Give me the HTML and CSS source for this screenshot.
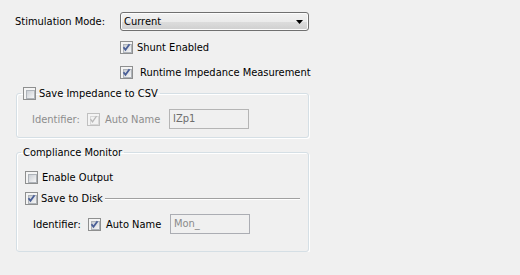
FILE: index.html
```html
<!DOCTYPE html>
<html lang="en">
<head>
  <meta charset="UTF-8">
  <title>Stimulation Settings</title>
  <link rel="stylesheet" href="styles.css">
</head>
<body>

<div class="panel">

  <div class="mode-row">
    <span class="field-label">Stimulation Mode:</span>
    <div class="combo">
      <span>Current</span>
      <svg class="arrow" width="7" height="4" viewBox="0 0 7 4"><path d="M0 0H7L3.5 4Z" fill="#000"/></svg>
    </div>
  </div>

  <div class="options">
    <label class="check">
      <span class="box"><svg viewBox="0 0 11 11"><path d="M2.5 5.2L4.5 7.8L8.5 2.2" /></svg></span>
      <span class="text">Shunt Enabled</span>
    </label>
    <label class="check wide">
      <span class="box"><svg viewBox="0 0 11 11"><path d="M2.5 5.2L4.5 7.8L8.5 2.2" /></svg></span>
      <span class="text">Runtime Impedance Measurement</span>
    </label>
  </div>

  <!-- Save impedance group -->
  <fieldset class="group">
    <legend>
      <label class="check tight">
        <span class="box"></span>
        <span class="text">Save Impedance to CSV</span>
      </label>
    </legend>
    <div class="group-body csv-body">
      <div class="ident-row disabled">
        <span class="ident-label">Identifier:</span>
        <label class="check">
          <span class="box"><svg viewBox="0 0 11 11"><path d="M2.5 5.2L4.5 7.8L8.5 2.2" /></svg></span>
          <span class="text auto">Auto Name</span>
        </label>
        <div class="textbox">IZp1</div>
      </div>
    </div>
  </fieldset>

  <!-- Compliance monitor group -->
  <fieldset class="group monitor">
    <legend>Compliance Monitor</legend>
    <div class="group-body monitor-body">
      <label class="check">
        <span class="box"></span>
        <span class="text">Enable Output</span>
      </label>
      <div class="disk-row">
        <label class="check tight">
          <span class="box"><svg viewBox="0 0 11 11"><path d="M2.5 5.2L4.5 7.8L8.5 2.2" /></svg></span>
          <span class="text">Save to Disk</span>
        </label>
        <div class="rule"></div>
      </div>
      <div class="ident-row">
        <span class="ident-label">Identifier:</span>
        <label class="check">
          <span class="box"><svg viewBox="0 0 11 11"><path d="M2.5 5.2L4.5 7.8L8.5 2.2" /></svg></span>
          <span class="text auto">Auto Name</span>
        </label>
        <div class="textbox">Mon_</div>
      </div>
    </div>
  </fieldset>

</div>

</body>
</html>
```

FILE: styles.css
```css
body {
  margin: 0;
  background: #f0f0f0;
  font-family: "DejaVu Sans Condensed", "Liberation Sans", sans-serif;
  font-size: 11px;
  color: #000;
}

.panel {
  padding-top: 12px;
}

.mode-row {
  display: flex;
  align-items: center;
  padding-left: 15px;
}

.field-label {
  width: 105px;
}

.combo {
  box-sizing: border-box;
  width: 189px;
  height: 19px;
  border: 1px solid #707070;
  border-radius: 3px;
  background: linear-gradient(to bottom, #f2f2f2 0%, #ebebeb 50%, #dddddd 51%, #cfcfcf 100%);
  box-shadow: inset 0 0 0 1px #fcfcfc;
  display: flex;
  align-items: center;
  justify-content: space-between;
  padding: 0 5px 0 3px;
}

.arrow {
  display: block;
}

.options {
  display: flex;
  flex-direction: column;
  gap: 12px;
  margin-top: 10px;
  padding-left: 120px;
}

/* checkbox */
.check {
  display: flex;
  align-items: center;
  height: 13px;
  line-height: 13px;
  white-space: nowrap;
}

.check .text {
  margin-left: 4px;
}
.check.wide .text { margin-left: 7px; }
.check.tight .text { margin-left: 3px; }
.check .text.auto { margin-left: 5px; }

.box {
  position: relative;
  box-sizing: border-box;
  width: 13px;
  height: 13px;
  flex: none;
  border: 1px solid #8e8f8f;
  background: #f4f4f4;
}

.box::before {
  content: "";
  position: absolute;
  left: 2px;
  top: 2px;
  width: 7px;
  height: 7px;
  border: 1px solid #aeb3b9;
  background: linear-gradient(135deg, #cbcfd5, #f6f6f6);
}

.box svg {
  position: absolute;
  left: 0;
  top: 0;
  width: 11px;
  height: 11px;
  z-index: 1;
}

.box svg path {
  fill: none;
  stroke: #4a5f97;
  stroke-width: 1.8;
}

/* group boxes */
.group {
  box-sizing: border-box;
  width: 293px;
  margin: 8px 0 0 16px;
  padding: 0;
  border: 1px solid #d5dfe5;
  border-radius: 3px;
  box-shadow: 1px 1px 0 #fff, inset 1px 1px 0 #fff;
}

.group legend {
  margin-left: 4px;
  padding: 0 2px;
  line-height: 13px;
}

.csv-body {
  padding: 9px 0 8px 15px;
}

.monitor-body {
  padding: 12px 8px 17px 8px;
  display: flex;
  flex-direction: column;
  gap: 8px;
}

.disk-row {
  display: flex;
  align-items: center;
}

.rule {
  flex: 1;
  margin-left: 2px;
  height: 1px;
  background: #a0a0a0;
  border-bottom: 1px solid #fff;
}

.ident-row {
  display: flex;
  align-items: center;
}

.monitor-body .ident-row {
  margin-top: 1px;
  padding-left: 8px;
}

.ident-label {
  width: 55px;
}

.ident-row .check {
  width: 82px;
}

.textbox {
  box-sizing: border-box;
  width: 80px;
  height: 20px;
  border: 1px solid #abadb3;
  background: #f0f0f0;
  color: #8a8a8a;
  line-height: 18px;
  padding-left: 3px;
}

.disabled {
  color: #8d8d8d;
}

.disabled .box {
  border-color: #c0c0c0;
}

.disabled .box::before {
  border-color: #d8d8d8;
  background: #f2f2f2;
}

.disabled .box svg path {
  stroke: #b8b8b8;
  stroke-width: 1.3;
}

.disabled .textbox {
  color: #6d6d6d;
  border-color: #b5b5b5;
}
```
